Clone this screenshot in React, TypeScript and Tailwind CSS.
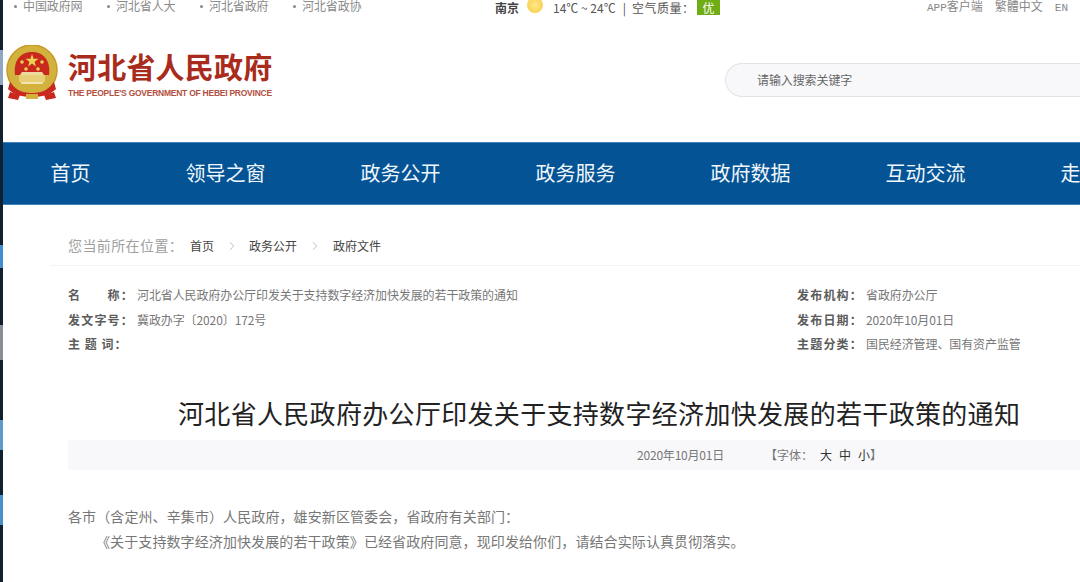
import { ChevronRight } from 'lucide-react';

const topLinks = ['中国政府网', '河北省人大', '河北省政府', '河北省政协'];
const navItems = ['首页', '领导之窗', '政务公开', '政务服务', '政府数据', '互动交流', '走进河北'];

function Emblem() {
  return (
    <svg width="52" height="56" viewBox="0 0 52 56" className="shrink-0">
      <circle cx="26" cy="25" r="25" fill="#d2b13c" />
      <circle cx="26" cy="25" r="25" fill="none" stroke="#c89a2a" strokeWidth="1.5" />
      <path d="M9 30 C7 14 16 7 26 7 C36 7 45 14 43 30 Z" fill="#c8281e" />
      <polygon points="26,9 27.6,13.8 32.6,13.8 28.5,16.8 30,21.6 26,18.6 22,21.6 23.5,16.8 19.4,13.8 24.4,13.8" fill="#f0d050" />
      <circle cx="16" cy="17" r="1.8" fill="#f0d050" />
      <circle cx="36" cy="17" r="1.8" fill="#f0d050" />
      <circle cx="20" cy="24" r="1.8" fill="#f0d050" />
      <circle cx="32" cy="24" r="1.8" fill="#f0d050" />
      <path d="M14 30 L38 30 L36 27 L16 27 Z" fill="#eed9a0" />
      <rect x="13" y="30" width="26" height="7" fill="#e7cf78" />
      <rect x="15" y="37" width="22" height="2" fill="#f3e3b0" />
      <path d="M4 37 C10 46 18 48 26 48 C34 48 42 46 48 37 L50 44 C44 50 36 52 26 52 C16 52 8 50 2 44 Z" fill="#c8281e" />
      <path d="M4 47 L14 50 L12 55 L2 53 Z M48 47 L38 50 L40 55 L50 53 Z" fill="#c8281e" />
      <rect x="20" y="49" width="12" height="5" fill="#d2b13c" />
    </svg>
  );
}

function MetaRow({ label, value, spaced }: { label: string; value: string; spaced?: boolean }) {
  return (
    <div className="flex h-[24.5px] items-center">
      <span className={`w-[69px] shrink-0 whitespace-nowrap font-bold text-[#5c5c5c] ${spaced ? 'tracking-[1px]' : 'tracking-[1.2px]'}`}>
        {label}
      </span>
      <span className="tracking-[-0.1px] text-[#777]">{value}</span>
    </div>
  );
}

export default function App() {
  return (
    <div className="flex h-[582px] w-[1080px] overflow-hidden bg-white font-['Noto_Sans_CJK_SC',sans-serif]">
      {/* Sliver of the desktop behind the browser */}
      <div className="flex w-[3px] shrink-0 flex-col bg-[#10202e]">
        <div className="mt-[50px] h-[35px] bg-[#8fa6c4]" />
        <div className="mt-[160px] h-[23px] bg-[#3f8fd0]" />
        <div className="mt-[57px] h-[35px] bg-[#8a8f96]" />
        <div className="mt-[60px] h-[30px] bg-[#5b9ccc]" />
        <div className="mt-[45px] h-[30px] bg-[#4a90c8]" />
      </div>

      <div className="min-w-0 flex-1">
        {/* Top bar */}
        <div className="flex h-[15px] text-[12px] leading-[12px] text-[#8a8a8a]">
          <div className="ml-[11px] flex w-[481px] shrink-0 gap-[24px]">
            {topLinks.map((t) => (
              <div key={t} className="flex w-[69px] shrink-0 items-start gap-[6px]">
                <span className="mt-[5px] h-[3px] w-[3px] shrink-0 rounded-full bg-[#888]" />
                <span className="whitespace-nowrap tracking-[-0.1px]">{t}</span>
              </div>
            ))}
          </div>
          <div className="flex w-[432px] shrink-0 items-start">
            <span className="mt-[2px] w-[32px] font-bold text-[#444]">南京</span>
            <span className="-mt-[3px] h-[16px] w-[16px] rounded-full bg-[radial-gradient(circle,#ffe98a,#f5c93e)]" />
            <span className="ml-[10px] mt-[2px] whitespace-nowrap text-[#555]">14℃ ~ 24℃</span>
            <span className="ml-[7px] mt-[2px] text-[#555]">|</span>
            <span className="ml-[6px] mt-[2px] w-[65px] shrink-0 whitespace-nowrap tracking-[0.5px] text-[#555]">{'空气质量\uFF1A'}</span>
            <span className="flex h-[15px] w-[23px] items-center justify-center bg-[#70ad14] text-white">优</span>
          </div>
          <div className="flex items-baseline gap-[12px] whitespace-nowrap text-[#888]">
            <span>
              <span className="font-['Liberation_Mono',monospace] text-[11px]">APP</span>客户端
            </span>
            <span>繁體中文</span>
            <span className="font-['Liberation_Mono',monospace] text-[11px]">EN</span>
          </div>
        </div>

        {/* Logo and search */}
        <div className="flex h-[127px] items-start">
          <div className="ml-[3px] mt-[30px]">
            <Emblem />
          </div>
          <div className="ml-[10px] mt-[32px] w-[204px] shrink-0">
            <div className="whitespace-nowrap text-[29px] font-bold leading-[38px] tracking-[0.2px] text-[#a92b1c]">河北省人民政府</div>
            <div className="mt-[2px] whitespace-nowrap font-['Liberation_Sans',sans-serif] text-[8.5px] font-bold leading-[12px] tracking-[-0.25px] text-[#b4503f]">
              THE PEOPLE'S GOVERNMENT OF HEBEI PROVINCE
            </div>
          </div>
          <div className="ml-[453px] mt-[48px] flex h-[34px] flex-1 items-center rounded-l-full border border-r-0 border-[#e3e3e7] bg-[#f8f8fb] pl-[31px] text-[12px] tracking-[-0.1px] text-[#666]">
            请输入搜索关键字
          </div>
        </div>

        {/* Main navigation */}
        <nav className="flex h-[63px] items-center gap-[95px] overflow-hidden border-y border-[#3d83bd] bg-[#045395] pb-[2px] pl-[47.5px] text-[20px] text-[#f0f7fc]">
          {navItems.map((item) => (
            <span key={item} className="shrink-0 whitespace-nowrap">
              {item}
            </span>
          ))}
        </nav>

        {/* Breadcrumb */}
        <div className="ml-[47px] flex h-[61px] items-center border-b border-[#f3f3f5] pl-[18px] pt-[21px] text-[12px] text-[#444]">
          <span className="w-[122px] shrink-0 whitespace-nowrap text-[14px] tracking-[0.4px] text-[#a0a0a0]">{'您当前所在位置\uFF1A'}</span>
          <span>首页</span>
          <ChevronRight className="mx-[10.5px] h-[16px] w-[14px] text-[#999]" strokeWidth={1.1} />
          <span>政务公开</span>
          <ChevronRight className="mx-[11px] h-[16px] w-[14px] text-[#999]" strokeWidth={1.1} />
          <span>政府文件</span>
        </div>

        {/* Document info */}
        <div className="ml-[65px] mt-[17px] flex text-[12px]">
          <div className="w-[729px] shrink-0">
            <MetaRow label={'名\u3000\u3000称\uFF1A'} value="河北省人民政府办公厅印发关于支持数字经济加快发展的若干政策的通知" />
            <MetaRow label={'发文字号\uFF1A'} value="冀政办字〔2020〕172号" />
            <MetaRow label={'主 题 词\uFF1A'} value="" spaced />
          </div>
          <div className="flex-1">
            <MetaRow label={'发布机构\uFF1A'} value="省政府办公厅" />
            <MetaRow label={'发布日期\uFF1A'} value="2020年10月01日" />
            <MetaRow label={'主题分类\uFF1A'} value="国民经济管理、国有资产监管" />
          </div>
        </div>

        {/* Title */}
        <h1 className="ml-[175px] mt-[38.5px] whitespace-nowrap text-[26px] font-normal leading-[36px] tracking-[0.32px] text-[#222]">
          河北省人民政府办公厅印发关于支持数字经济加快发展的若干政策的通知
        </h1>
        <div className="ml-[65px] mt-[9px] flex h-[30px] items-center bg-[#f8f8fb] pl-[569px] text-[12px] text-[#777]">
          <span className="w-[128px] shrink-0 tracking-[-0.2px]">2020年10月01日</span>
          <span className="whitespace-nowrap">{'【字体\uFF1A'}</span>
          <span className="ml-[7px] flex gap-[7px] whitespace-nowrap text-[#333]">
            <span>大</span>
            <span>中</span>
            <span>小</span>
          </span>
          <span>】</span>
        </div>

        {/* Body */}
        <div className="ml-[65px] mt-[34px] text-[14px] leading-[25px] text-[#777]">
          <p className="tracking-[0.1px]">{'各市\uFF08含定州、辛集市\uFF09人民政府\uFF0C雄安新区管委会\uFF0C省政府有关部门\uFF1A'}</p>
          <p className="ml-[28px] tracking-[0.1px]">{'《关于支持数字经济加快发展的若干政策》已经省政府同意\uFF0C现印发给你们\uFF0C请结合实际认真贯彻落实。'}</p>
        </div>
      </div>
    </div>
  );
}
